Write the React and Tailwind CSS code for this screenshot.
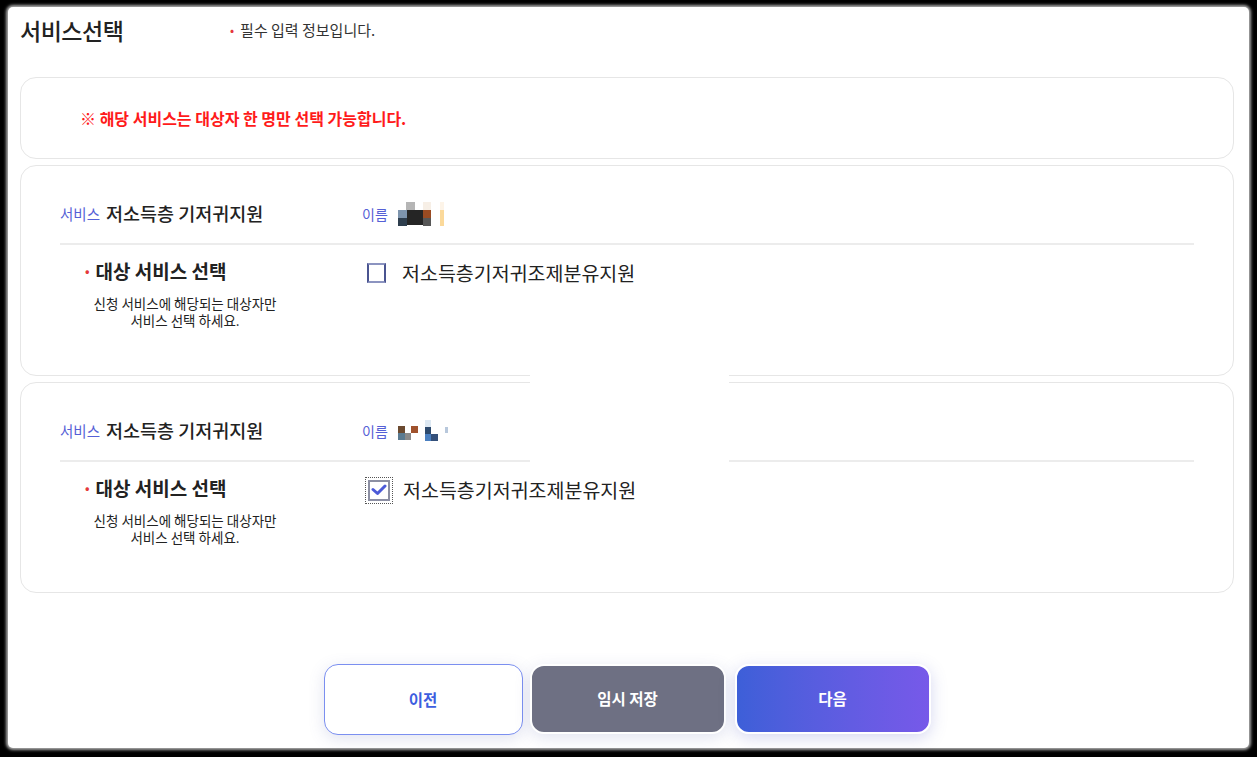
import { useState } from 'react'

const FONT = "font-['Noto_Sans_CJK_KR','Noto_Sans',sans-serif]"

function NameBlur({ cells, w = 52, h = 26 }) {
  return (
    <svg width={w} height={h} viewBox={`0 0 ${w} ${h}`} className="block">
      {cells.map(([x, y, cw, ch, c], i) => (
        <rect key={i} x={x} y={y} width={cw} height={ch} fill={c} />
      ))}
    </svg>
  )
}

const name1 = [
  [10, 1, 9, 8, '#b5b5b5'],
  [27, 1, 8, 8, '#f7efe6'],
  [2, 9, 9, 8, '#7d94ad'],
  [11, 9, 16, 15, '#252525'],
  [27, 9, 8, 8, '#9a4b22'],
  [27, 17, 8, 8, '#575757'],
  [2, 17, 9, 8, '#2e3e4e'],
  [44, 1, 4, 8, '#fdf4e8'],
  [44, 9, 4, 16, '#fbd99a'],
]

const name2 = [
  [2, 8, 7, 7, '#6b4a30'],
  [15, 8, 7, 7, '#a0522d'],
  [2, 15, 7, 7, '#5a7a90'],
  [9, 15, 6, 7, '#8a8a8a'],
  [29, 2, 6, 7, '#dde8f2'],
  [29, 9, 6, 7, '#2d4a6e'],
  [29, 16, 6, 7, '#4a7fc0'],
  [35, 16, 7, 7, '#34507a'],
  [49, 9, 5, 6, '#b8c8dc'],
]

function ServiceCard({ name, checked, onToggle }) {
  return (
    <div className="mt-[6px] h-[211px] rounded-[16px] border border-[#e6e6e6] px-[39px] pt-[35px]">
      <div className="flex h-[26px] items-center">
        <div className="flex w-[302px] items-center gap-[6px]">
          <span className="text-[14.5px] text-[#5560d6]">서비스</span>
          <span className="text-[18.5px] font-medium text-[#222]">저소득층 기저귀지원</span>
        </div>
        <span className="text-[14px] text-[#5560d6]">이름</span>
        <span className="ml-[8px]">
          <NameBlur cells={name} />
        </span>
      </div>
      <div className="mt-[16px] h-[2px] bg-[#ececec]" />
      <div className="flex pt-[16px]">
        <div className="w-[302px]">
          <div className="flex h-[20px] items-center pl-[25px] text-[19px] font-bold text-[#222]">
            <span className="mr-[6px] text-[12px] text-[#e5383b]">•</span>
            대상 서비스 선택
          </div>
          <p className="mt-[14px] w-[250px] text-center text-[13.5px] leading-[17px] text-[#222]">
            신청 서비스에 해당되는 대상자만
            <br />
            서비스 선택 하세요.
          </p>
        </div>
        <label className="flex h-[24px] cursor-pointer items-center" onClick={onToggle}>
          {checked ? (
            <span className="ml-[6px] flex h-[21px] w-[22px] shrink-0 items-center justify-center border-2 border-[#8c8fa3] outline-1 outline-offset-[2px] outline-dotted outline-[#555]">
              <svg width="16" height="12" viewBox="0 0 16 12">
                <path d="M2 5.5 L6.5 9.5 L14 2" fill="none" stroke="#4c5ad8" strokeWidth="3" strokeLinecap="round" strokeLinejoin="round" />
              </svg>
            </span>
          ) : (
            <span className="ml-[5px] block h-[20px] w-[19px] shrink-0 border-2 border-[#4a5490] border-y-[#8c94c0]" />
          )}
          <span className={`${checked ? 'ml-[13px]' : 'ml-[16px]'} text-[19.5px] text-[#222]`}>
            저소득층기저귀조제분유지원
          </span>
        </label>
      </div>
    </div>
  )
}

export default function App() {
  const [checks, setChecks] = useState([false, true])

  const toggle = (i) => setChecks((c) => c.map((v, j) => (j === i ? !v : false)))

  return (
    <div className={`h-[757px] bg-black pb-[9px] pl-[8px] pr-[8px] pt-[7px] ${FONT}`}>
      <div className="relative h-full rounded-[5px] bg-white pl-[12px] pr-[15px] pt-[8px] shadow-[0_0_3px_2px_rgba(190,190,190,0.9)]">
        {/* header */}
        <div className="flex h-[30px] items-center">
          <h1 className="w-[210px] text-[23px] font-medium tracking-[-0.5px] text-[#222]">서비스선택</h1>
          <span className="mr-[6px] text-[12px] text-[#e5383b]">•</span>
          <span className="text-[15px] text-[#333]">필수 입력 정보입니다.</span>
        </div>

        {/* notice */}
        <div className="mt-[32px] flex h-[82px] items-center rounded-[16px] border border-[#e6e6e6] pl-[59px]">
          <p className="text-[16px] font-bold text-[#ff1a1a]">※ 해당 서비스는 대상자 한 명만 선택 가능합니다.</p>
        </div>

        <ServiceCard name={name1} checked={checks[0]} onToggle={() => toggle(0)} />
        <ServiceCard name={name2} checked={checks[1]} onToggle={() => toggle(1)} />

        {/* buttons */}
        <div className="mt-[71px] flex justify-center">
          <button className="h-[71px] w-[199px] rounded-[14px] border-[1.5px] border-[#7b8ff0] bg-white text-[15.5px] font-bold text-[#3d5ee0] shadow-[0_4px_16px_rgba(90,100,170,0.18)]">
            이전
          </button>
          <button className="ml-[7px] h-[70px] w-[196px] rounded-[14px] border-2 border-white bg-[#6e7083] text-[15.5px] font-bold text-white shadow-[0_4px_16px_rgba(90,100,170,0.18)]">
            임시 저장
          </button>
          <button className="ml-[9px] h-[70px] w-[196px] rounded-[14px] border-2 border-white bg-gradient-to-r from-[#3d5fd8] to-[#7759e9] text-[15.5px] font-bold text-white shadow-[0_4px_16px_rgba(90,100,200,0.25)]">
            다음
          </button>
        </div>

        {/* blank patch over the cards (as in the capture) */}
        <div className="absolute left-[522px] top-[355px] h-[111px] w-[199px] bg-white" />
      </div>
    </div>
  )
}
